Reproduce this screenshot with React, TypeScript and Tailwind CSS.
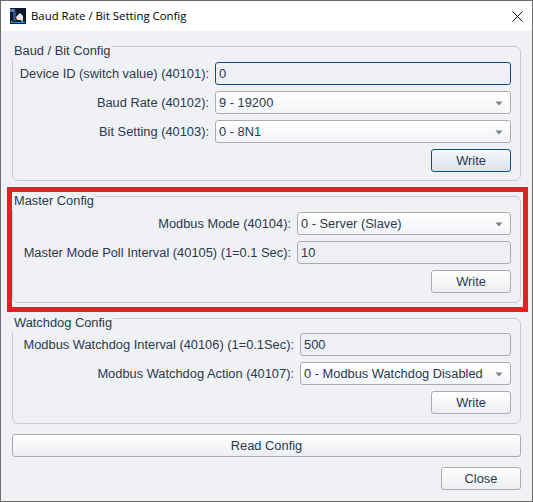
import React from 'react';

// ===== FIELD PARTS =====
const controlBase = 'h-[23px] rounded-[3px] border flex items-center pl-[3px] pt-[1px] text-[12.85px]';

const Select: React.FC<{ value: string }> = ({ value }) => (
  <div className={`${controlBase} border-[#acacac] bg-gradient-to-b from-[#ffffff] to-[#f2f4f7] justify-between pr-[7px]`}>
    <span>{value}</span>
    <svg width="8" height="5" viewBox="0 0 8 5" className="shrink-0">
      <path d="M0.5 0.5h7L4 4.5z" fill="#7d8287" />
    </svg>
  </div>
);

const Input: React.FC<{ value: string; focused?: boolean }> = ({ value, focused }) => (
  <div className={`${controlBase} ${focused ? 'border-[#0b4d92]' : 'border-[#acacac]'} bg-[#eef0f4]`}>
    {value}
  </div>
);

const Button: React.FC<{ label: string; primary?: boolean; className?: string }> = ({ label, primary, className }) => (
  <div
    className={`h-[23px] rounded-[3px] border flex items-center justify-center pt-[1px] text-[12.85px] ${
      primary
        ? 'border-[#0b4d92] bg-gradient-to-b from-[#f7f8fa] to-[#dbe2ec]'
        : 'border-[#acacac] bg-gradient-to-b from-[#ffffff] to-[#eceef1]'
    } ${className ?? ''}`}
  >
    {label}
  </div>
);

const Group: React.FC<{
  title: string;
  className: string;
  cols: string;
  children: React.ReactNode;
}> = ({ title, className, cols, children }) => (
  <div className={`relative mx-[11px] mt-[15px] rounded-[6px] border border-[#c9ccd1] px-[9px] ${className}`}>
    <span className="absolute left-[-2px] top-[-4px] bg-[#eff1f5] pl-[3px] pr-[1px] pb-[1px] leading-[16px] text-[12.85px]">
      {title}
    </span>
    <div className={`grid gap-[6px] ${cols}`}>{children}</div>
  </div>
);

const Label: React.FC<{ text: string }> = ({ text }) => (
  <div className="h-[23px] flex items-center justify-end pt-[1px] whitespace-nowrap text-[12.85px]">{text}</div>
);

// ===== APP =====
export default function App() {
  return (
    <div className="relative w-[533px] h-[502px] border border-[#6b6b6b] bg-[#eff1f5] text-[#2b394c] overflow-hidden font-['Liberation_Sans',Arial,sans-serif]">
      {/* Title bar */}
      <div className="h-[30px] bg-white flex items-center px-[9px] text-[11.4px] text-black font-['Open_Sans',sans-serif]">
        <svg width="16" height="16" viewBox="0 0 16 16" className="shrink-0 mr-[5px]">
          <rect width="16" height="16" fill="#0c1a30" />
          <rect x="0" y="1" width="5" height="3" fill="#4f7fb5" />
          <rect x="3" y="4" width="3" height="9" fill="#2c4f7c" />
          <path d="M6 9l4-4 3 3v4H7z" fill="#e8ebf0" />
          <rect x="1" y="14" width="14" height="1" fill="#1f8fe0" />
          <rect x="11" y="12" width="2" height="2" fill="#4cc24c" />
          <rect x="1" y="13" width="1" height="1" fill="#e4d44c" />
        </svg>
        <span className="flex-1">Baud Rate / Bit Setting Config</span>
        <svg width="11" height="11" viewBox="0 0 11 11">
          <path d="M0.5 0.5l10 10M10.5 0.5l-10 10" stroke="#111" strokeWidth="1" fill="none" />
        </svg>
      </div>

      {/* Baud / Bit Config */}
      <Group title="Baud / Bit Config" className="h-[135px] pt-[15px]" cols="grid-cols-[187px_296px]">
        <Label text="Device ID (switch value) (40101):" />
        <Input value="0" focused />
        <Label text="Baud Rate (40102):" />
        <Select value="9 - 19200" />
        <Label text="Bit Setting (40103):" />
        <Select value="0 - 8N1" />
        <div />
        <Button label="Write" primary className="w-[80px] justify-self-end" />
      </Group>

      {/* Master Config */}
      <Group title="Master Config" className="h-[107px] pt-[15px]" cols="grid-cols-[269px_214px]">
        <Label text="Modbus Mode (40104):" />
        <Select value="0 - Server (Slave)" />
        <Label text="Master Mode Poll Interval (40105) (1=0.1 Sec):" />
        <Input value="10" />
        <div />
        <Button label="Write" className="w-[80px] justify-self-end" />
      </Group>

      {/* Watchdog Config */}
      <Group title="Watchdog Config" className="h-[106px] pt-[14px]" cols="grid-cols-[272px_211px]">
        <Label text="Modbus Watchdog Interval (40106) (1=0.1Sec):" />
        <Input value="500" />
        <Label text="Modbus Watchdog Action (40107):" />
        <Select value="0 - Modbus Watchdog Disabled" />
        <div />
        <Button label="Write" className="w-[80px] justify-self-end" />
      </Group>

      <Button label="Read Config" className="mx-[11px] mt-[10px]" />
      <div className="flex justify-end mt-[10px] mr-[11px]">
        <Button label="Close" className="w-[80px]" />
      </div>

      {/* Red annotation frame */}
      <div className="absolute left-[6px] top-[186px] w-[521px] h-[125px] border-[5px] border-[#ed1c24] pointer-events-none" />
    </div>
  );
}
